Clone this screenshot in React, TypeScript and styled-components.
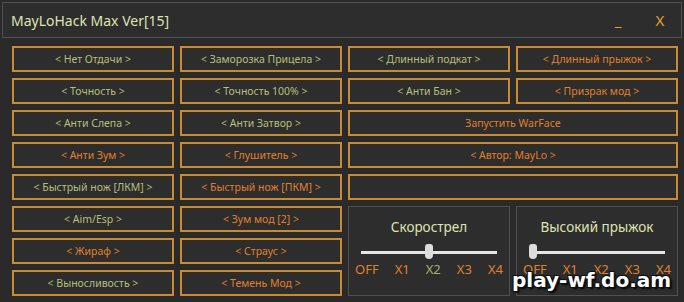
import React from "react";
import styled, { createGlobalStyle } from "styled-components";

const GlobalStyle = createGlobalStyle`
  html, body {
    margin: 0;
    padding: 0;
    background: #262626;
  }
  body {
    font-family: "Noto Sans", "Liberation Sans", sans-serif;
  }
`;

const colors = {
  bg: "#2a2a2a",
  panel: "#2d2d2d",
  frame: "#505050",
  border: "#c98a35",
  green: "#b7bf7a",
  orange: "#e0802c",
  light: "#dfe4b0",
};

const Window = styled.div`
  position: relative;
  width: 684px;
  height: 302px;
  background: ${colors.bg};
  overflow: hidden;
`;

const TitleBar = styled.div`
  margin: 2px 2px 0;
  height: 34px;
  border: 1px solid ${colors.frame};
  background: ${colors.panel};
  display: flex;
  align-items: center;
  padding: 0 0 0 8px;
`;

const Title = styled.div`
  flex: 1;
  color: ${colors.light};
  font-size: 14px;
`;

const TitleButton = styled.div`
  color: #e5a032;
  font-size: 15px;
  width: 42px;
  text-align: center;
`;

const Grid = styled.div`
  display: grid;
  grid-template-columns: repeat(4, 162px);
  grid-auto-rows: 26px;
  column-gap: 6px;
  row-gap: 6px;
  padding: 8px 0 0 12px;
`;

const Button = styled.div<{ $orange?: boolean; $span?: number }>`
  grid-column: span ${(p) => p.$span ?? 1};
  box-sizing: border-box;
  border: 2px solid ${colors.border};
  background: ${colors.panel};
  color: ${(p) => (p.$orange ? colors.orange : colors.green)};
  font-size: 10.5px;
  display: flex;
  align-items: center;
  justify-content: center;
  white-space: nowrap;
`;

const SliderPanel = styled.div<{ $col: number }>`
  grid-column: ${(p) => p.$col};
  grid-row: 6 / span 3;
  box-sizing: border-box;
  border: 1px solid ${colors.frame};
  background: ${colors.panel};
  display: flex;
  flex-direction: column;
  align-items: center;
  padding-top: 10px;
`;

const SliderTitle = styled.div`
  color: ${colors.light};
  font-size: 13.5px;
  line-height: 20px;
`;

const Track = styled.div`
  position: relative;
  margin-top: 14px;
  width: 136px;
  height: 3px;
  background: #e6e6e6;
`;

const Thumb = styled.div`
  position: absolute;
  top: -7px;
  width: 8px;
  height: 15px;
  border-radius: 3px 3px 4px 4px;
  background: #dcdcdc;
`;

const Ticks = styled.div`
  margin-top: 6px;
  width: 148px;
  display: flex;
  justify-content: space-between;
`;

const Tick = styled.span<{ $active?: boolean }>`
  color: ${(p) => (p.$active ? "#a9b06e" : colors.orange)};
  font-size: 13px;
`;

const Watermark = styled.div`
  position: absolute;
  left: 512px;
  top: 268px;
  color: #ffffff;
  font-family: "DejaVu Sans", "Liberation Sans", sans-serif;
  font-weight: bold;
  font-size: 20px;
  text-shadow: 1px 1px 0 #111, -1px -1px 0 #111, 1px -1px 0 #111, -1px 1px 0 #111, 2px 2px 2px #000;
`;

const levels = ["OFF", "X1", "X2", "X3", "X4"];

const Slider: React.FC<{ title: string; value: number; col: number }> = ({ title, value, col }) => (
  <SliderPanel $col={col}>
    <SliderTitle>{title}</SliderTitle>
    <Track>
      <Thumb style={{ left: (value / 4) * 128 }} />
    </Track>
    <Ticks>
      {levels.map((l, i) => (
        <Tick key={l} $active={i === value && i !== 0}>
          {l}
        </Tick>
      ))}
    </Ticks>
  </SliderPanel>
);

const buttons: { label: string; orange?: boolean; span?: number }[] = [
  { label: "< Нет Отдачи >" },
  { label: "< Заморозка Прицела >" },
  { label: "< Длинный подкат >" },
  { label: "< Длинный прыжок >", orange: true },
  { label: "< Точность >" },
  { label: "< Точность 100% >" },
  { label: "< Анти Бан >" },
  { label: "< Призрак мод >", orange: true },
  { label: "< Анти Слепа >" },
  { label: "< Анти Затвор >" },
  { label: "Запустить WarFace", orange: true, span: 2 },
  { label: "< Анти Зум >", orange: true },
  { label: "< Глушитель >", orange: true },
  { label: "< Автор: MayLo >", orange: true, span: 2 },
  { label: "< Быстрый нож [ЛКМ] >" },
  { label: "< Быстрый нож [ПКМ] >", orange: true },
  { label: "", span: 2 },
];

const leftRest: { label: string; orange?: boolean }[] = [
  { label: "< Aim/Esp >" },
  { label: "< Зум мод [2] >", orange: true },
  { label: "< Жираф >", orange: true },
  { label: "< Страус >", orange: true },
  { label: "< Выносливость >" },
  { label: "< Темень Мод >", orange: true },
];

export default function App() {
  return (
    <>
      <GlobalStyle />
      <Window>
        <TitleBar>
          <Title>MayLoHack Max Ver[15]</Title>
          <TitleButton>_</TitleButton>
          <TitleButton>X</TitleButton>
        </TitleBar>
        <Grid>
          {buttons.map((b, i) => (
            <Button key={i} $orange={b.orange} $span={b.span}>
              {b.label}
            </Button>
          ))}
          {leftRest.map((b, i) => (
            <Button key={"l" + i} $orange={b.orange}>
              {b.label}
            </Button>
          ))}
          <Slider title="Скорострел" value={2} col={3} />
          <Slider title="Высокий прыжок" value={0} col={4} />
        </Grid>
        <Watermark>play-wf.do.am</Watermark>
      </Window>
    </>
  );
}
